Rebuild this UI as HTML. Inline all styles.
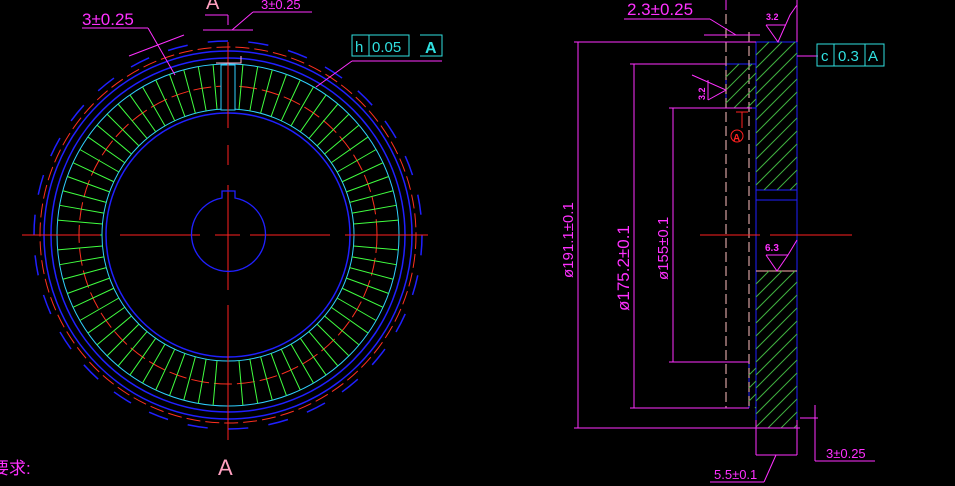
<!DOCTYPE html>
<html><head><meta charset="utf-8"><style>
html,body{margin:0;padding:0;background:#000;width:955px;height:486px;overflow:hidden}
svg{display:block}
text{font-family:"Liberation Sans","Noto Sans CJK SC",sans-serif}
</style></head><body>
<svg id="s" width="955" height="486" viewBox="0 0 955 486" xmlns="http://www.w3.org/2000/svg">
<rect width="955" height="486" fill="#000"/>
<g id="gear" fill="none"></g>
<rect x="221" y="65" width="14" height="45" fill="#000" stroke="#30d0ff" stroke-width="1"/>
<g stroke="#ff2020" stroke-width="1">
<line x1="22" y1="235" x2="100" y2="235"/><line x1="120" y1="235" x2="200" y2="235"/><line x1="215" y1="235" x2="240" y2="235"/><line x1="250" y1="235" x2="330" y2="235"/><line x1="345" y1="235" x2="428" y2="235"/>
<line x1="228" y1="42" x2="228" y2="128"/><line x1="228" y1="145" x2="228" y2="165"/><line x1="228" y1="185" x2="228" y2="290"/><line x1="228" y1="305" x2="228" y2="440"/>
</g>
<path d="M222 191 L222 198 A37 37 0 1 0 235 198 L235 191 Z" stroke="#2020ff" fill="none" stroke-width="1.3"/>
<g stroke="#ff30ff" stroke-width="1" fill="none">
<line x1="82" y1="28" x2="148" y2="28"/><line x1="148" y1="28" x2="175" y2="75"/>
<line x1="129" y1="56" x2="184" y2="35"/>
<line x1="203" y1="30" x2="253" y2="30"/><line x1="253" y1="12" x2="312" y2="12"/><line x1="253" y1="12" x2="232" y2="30"/>
<line x1="205" y1="15" x2="228" y2="15"/><line x1="228" y1="15" x2="228" y2="25"/>
<line x1="352" y1="61" x2="442" y2="61"/><line x1="352" y1="61" x2="316" y2="87"/>
</g>
<polyline points="216,63 241,63 241,56" stroke="#ffb0d0" fill="none"/>
<text x="82" y="25" fill="#ff30ff" font-size="17">3±0.25</text>
<text x="261" y="9" fill="#ff30ff" font-size="13">3±0.25</text>
<text x="206" y="9" fill="#ffa0c0" font-size="20">A</text>
<text x="218" y="475" fill="#ffa0c0" font-size="22">A</text>
<g stroke="#30e0e0" fill="none"><rect x="352" y="35" width="57" height="21"/><line x1="369" y1="35" x2="369" y2="56"/><polyline points="420,35 442,35 442,56 420,56"/></g>
<text x="355" y="52" fill="#30e0e0" font-size="15">h</text><text x="372" y="52" fill="#30e0e0" font-size="15">0.05</text><text x="425" y="53" fill="#30e0e0" font-size="16" font-weight="bold">A</text>
<text x="-8" y="474" fill="#ff30ff" font-size="17">要求:</text>
<g fill="none">
<rect x="756" y="42" width="41" height="386" stroke="#2020ff"/>
<line x1="726" y1="64" x2="756" y2="64" stroke="#2020ff"/><line x1="726" y1="64" x2="726" y2="108" stroke="#2020ff"/><line x1="726" y1="108" x2="756" y2="108" stroke="#2020ff"/>
<line x1="749" y1="362" x2="749" y2="408" stroke="#2020ff"/>
<line x1="756" y1="190" x2="797" y2="190" stroke="#2020ff"/><line x1="756" y1="200" x2="797" y2="200" stroke="#2020ff"/><line x1="756" y1="271" x2="797" y2="271" stroke="#ffb0b0"/>
<line x1="726" y1="0" x2="726" y2="408" stroke="#ffc0c0" stroke-dasharray="10 4"/>
<line x1="749" y1="32" x2="749" y2="408" stroke="#ffc0c0" stroke-dasharray="10 4"/>
<line x1="700" y1="235" x2="760" y2="235" stroke="#ff2020"/><line x1="770" y1="235" x2="852" y2="235" stroke="#ff2020"/>
</g>
<g id="hatch" stroke="#40b040" stroke-width="1"></g>
<g stroke="#ff30ff" fill="none">
<line x1="726" y1="0" x2="726" y2="10"/><line x1="797" y1="0" x2="797" y2="42"/>
<line x1="574" y1="42" x2="756" y2="42"/><line x1="578" y1="42" x2="578" y2="428"/><line x1="574" y1="428" x2="800" y2="428"/>
<line x1="630" y1="64" x2="726" y2="64"/><line x1="634" y1="64" x2="634" y2="408"/><line x1="630" y1="408" x2="749" y2="408"/>
<line x1="669" y1="108" x2="752" y2="108"/><line x1="673" y1="108" x2="673" y2="362"/><line x1="669" y1="362" x2="749" y2="362"/>
<line x1="624" y1="19" x2="710" y2="19"/><line x1="710" y1="19" x2="736" y2="35"/><line x1="704" y1="35" x2="760" y2="35"/>
<polyline points="766,25 778,42 790,15 797,5"/><line x1="766" y1="25" x2="786" y2="25"/>
<polyline points="692,75 726,90 708,100"/><line x1="708" y1="80" x2="708" y2="100"/>
<polyline points="766,255 777,271 788,255 797,240"/><line x1="766" y1="255" x2="788" y2="255"/>
<line x1="797" y1="56" x2="818" y2="56"/>
<line x1="756" y1="420" x2="756" y2="455"/><line x1="797" y1="420" x2="797" y2="455"/><line x1="756" y1="455" x2="797" y2="455"/>
<line x1="776" y1="455" x2="764" y2="482"/><line x1="710" y1="482" x2="764" y2="482"/>
<line x1="800" y1="418" x2="818" y2="418"/><line x1="815" y1="405" x2="815" y2="461"/><line x1="815" y1="461" x2="875" y2="461"/>
</g>
<line x1="736" y1="112" x2="748" y2="112" stroke="#ff2020"/><line x1="742" y1="112" x2="742" y2="128" stroke="#ff2020"/>
<circle cx="737" cy="136" r="6" stroke="#ff2020" fill="none"/><text x="733" y="141" fill="#ff2020" font-size="10" font-weight="bold">A</text>
<g stroke="#30e0e0" fill="none"><rect x="817" y="44" width="67" height="22"/><line x1="834" y1="44" x2="834" y2="66"/><line x1="865" y1="44" x2="865" y2="66"/></g>
<text x="821" y="61" fill="#30e0e0" font-size="15">c</text><text x="838" y="61" fill="#30e0e0" font-size="15">0.3</text><text x="868" y="61" fill="#30e0e0" font-size="15">A</text>
<text x="627" y="15" fill="#ff30ff" font-size="17">2.3±0.25</text>
<text x="766" y="20" fill="#ff30ff" font-size="9" font-weight="bold">3.2</text>
<text x="765" y="251" fill="#ff30ff" font-size="10" font-weight="bold">6.3</text>
<text transform="translate(705,100) rotate(-90)" fill="#ff30ff" font-size="9" font-weight="bold">3.2</text>
<text transform="translate(573,278) rotate(-90)" fill="#ff30ff" font-size="15">ø191.1±0.1</text>
<text transform="translate(629,311) rotate(-90)" fill="#ff30ff" font-size="17">ø175.2±0.1</text>
<text transform="translate(668,280) rotate(-90)" fill="#ff30ff" font-size="15">ø155±0.1</text>
<text x="714" y="479" fill="#ff30ff" font-size="13">5.5±0.1</text>
<text x="826" y="458" fill="#ff30ff" font-size="13">3±0.25</text>
</svg>
<script>
var NS="http://www.w3.org/2000/svg",g=document.getElementById('gear'),cx=228,cy=235;
function el(t,a){var e=document.createElementNS(NS,t);for(var k in a)e.setAttribute(k,a[k]);g.appendChild(e);return e;}
el('circle',{cx:cx,cy:cy,r:184,stroke:'#2020ff','stroke-width':1.5});
el('circle',{cx:cx,cy:cy,r:177,stroke:'#2020ff','stroke-width':1.5});
el('circle',{cx:cx,cy:cy,r:188,stroke:'#ff3020','stroke-width':1,'stroke-dasharray':'14 5'});
el('circle',{cx:cx,cy:cy,r:171,stroke:'#30d0ff','stroke-width':1});
el('circle',{cx:cx,cy:cy,r:126,stroke:'#30d0ff','stroke-width':1});
el('circle',{cx:cx,cy:cy,r:122,stroke:'#2020ff','stroke-width':1.5});
el('circle',{cx:cx,cy:cy,r:149,stroke:'#ff3020','stroke-width':1,'stroke-dasharray':'18 5'});
for(var i=0;i<72;i++){var a=i*5*Math.PI/180,c=Math.cos(a),s=Math.sin(a);
if(i==54)continue;
el('line',{x1:cx+126*c,y1:cy+126*s,x2:cx+171*c,y2:cy+171*s,stroke:'#40ff40','stroke-width':1});}
for(var i=0;i<30;i++){var a0=(i*12)*Math.PI/180,a1=(i*12+6)*Math.PI/180,r=194;
el('path',{d:'M'+(cx+r*Math.cos(a0))+' '+(cy+r*Math.sin(a0))+' A'+r+' '+r+' 0 0 1 '+(cx+r*Math.cos(a1))+' '+(cy+r*Math.sin(a1)),stroke:'#2020ff','stroke-width':1.5});}
var h=document.getElementById('hatch');
function hl(x1,y1,x2,y2){var e=document.createElementNS(NS,'line');e.setAttribute('x1',x1);e.setAttribute('y1',y1);e.setAttribute('x2',x2);e.setAttribute('y2',y2);h.appendChild(e);}
function hatch(x0,x1,y0,y1){for(var k=y0-(x1-x0);k<y1+(x1-x0);k+=13){var ax=x0,ay=k+(x1-x0),bx=x1,by=k;
if(ay>y1){ax=x0+(ay-y1);ay=y1;}if(by<y0){bx=x1-(y0-by);by=y0;}if(ax<bx)hl(ax,ay,bx,by);}}
hatch(756,797,42,190);hatch(726,756,64,108);hatch(756,797,271,428);hatch(749,756,362,408);
</script>
</body></html>
